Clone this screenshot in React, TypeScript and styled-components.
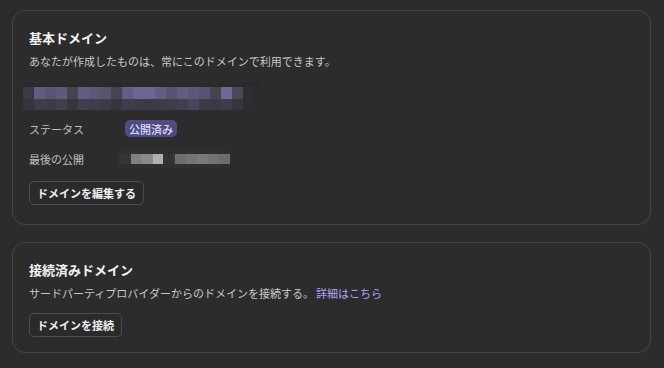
import styled, { createGlobalStyle } from 'styled-components';

const GlobalStyle = createGlobalStyle`
  html, body {
    margin: 0;
    padding: 0;
    background: #2c2c2c;
  }
  body {
    font-family: "Noto Sans CJK JP", "Noto Sans", sans-serif;
    -webkit-font-smoothing: antialiased;
  }
`;

const Page = styled.div`
  display: flex;
  flex-direction: column;
  gap: 17px;
  padding: 10px 13px 0 12px;
  width: 664px;
  height: 368px;
  box-sizing: border-box;
  background: #2c2c2c;
`;

const Card = styled.section<{ $padBottom: number }>`
  display: flex;
  flex-direction: column;
  align-items: flex-start;
  border: 1px solid #454545;
  border-radius: 13px;
  padding: 18px 16px ${(p) => p.$padBottom}px 16px;
  background: #2c2c2c;
`;

const Title = styled.h2`
  margin: 0;
  font-size: 13px;
  line-height: 18px;
  font-weight: 700;
  color: #f2f2f2;
`;

const Description = styled.p`
  margin: 6px 0 0;
  font-size: 11px;
  line-height: 16px;
  color: #c8c8c8;
`;

const Link = styled.a`
  margin-left: 2px;
  color: #a9a5f2;
  text-decoration: none;
`;

const Redacted = styled.svg<{ $offset: number }>`
  display: block;
  margin-left: ${(p) => p.$offset}px;
`;

const DomainBlur = styled(Redacted)`
  margin-top: 14px;
`;

const InfoRow = styled.div<{ $top: number; $height: number }>`
  display: grid;
  grid-template-columns: 96px auto;
  align-items: center;
  margin-top: ${(p) => p.$top}px;
  height: ${(p) => p.$height}px;
  line-height: 16px;
`;

const Label = styled.span`
  font-size: 11px;
  color: #c0c0c0;
`;

const Value = styled.div`
  display: flex;
  align-items: center;
  height: 100%;
`;

const Badge = styled.span`
  display: flex;
  align-items: center;
  height: 17px;
  padding: 0 4px;
  border-radius: 5px;
  background: #4f4d80;
  color: #dcd8ff;
  font-size: 11px;
  font-weight: 500;
`;

const Button = styled.button<{ $top: number }>`
  margin-top: ${(p) => p.$top}px;
  height: 24px;
  padding: 0 7px;
  border: 1px solid #4d4d4d;
  border-radius: 5px;
  background: #2a2a2a;
  color: #f0f0f0;
  font-family: inherit;
  font-size: 11px;
  font-weight: 700;
  cursor: pointer;
`;

const domainTop = [
  '#3b3a44', '#5f5d80', '#585674', '#5d5b7c', '#46454f', '#5f5d80', '#5a5878',
  '#56546f', '#46454f', '#605e83', '#6a6890', '#6a6890', '#605e82', '#56546f',
  '#5f5d80', '#5a5878', '#56546f', '#46454f', '#6c6a96', '#4a4958', '#2e2e30',
];
const domainBottom = [
  '#35343c', '#3e3d4a', '#3c3b47', '#403f4c', '#36353d', '#403f4c', '#3e3d49',
  '#3b3a45', '#36353d', '#3e3d4a', '#3c3b47', '#3a3945', '#3c3b47', '#3e3d4a',
  '#403f4c', '#474659', '#3c3b47', '#3a3945', '#3e3d4a', '#36353d', '#2e2e30',
];
const dateCells = [
  '#353535', '#808080', '#8a8a8a', '#b0b0b0', '#3a3a3a', '#6e6e6e', '#747474',
  '#7a7a7a', '#727272', '#6c6c6c',
];

const DomainMosaic = () => (
  <DomainBlur $offset={-7} width={236} height={29} viewBox="0 0 236 29">
    <rect x={0} y={0} width={236} height={4} fill="#2a2a2b" />
    {domainTop.map((c, i) => (
      <rect key={`t${i}`} x={1 + i * 11} y={4} width={11} height={12} fill={c} />
    ))}
    {domainBottom.map((c, i) => (
      <rect key={`b${i}`} x={1 + i * 11} y={16} width={11} height={11} fill={c} />
    ))}
  </DomainBlur>
);

const DateMosaic = () => (
  <Redacted $offset={-7} width={112} height={18} viewBox="0 0 112 18">
    <rect x={0} y={0} width={112} height={18} fill="#2f2f2f" />
    {dateCells.map((c, i) => (
      <rect key={i} x={2 + i * 11} y={4} width={11} height={10} fill={c} />
    ))}
    <rect x={45} y={4} width={10} height={10} fill="#323232" />
  </Redacted>
);

export default function App() {
  return (
    <>
      <GlobalStyle />
      <Page>
        <Card $padBottom={19}>
          <Title>基本ドメイン</Title>
          <Description>あなたが作成したものは、常にこのドメインで利用できます。</Description>
          <DomainMosaic />
          <InfoRow $top={8} $height={17}>
            <Label>ステータス</Label>
            <Value>
              <Badge>公開済み</Badge>
            </Value>
          </InfoRow>
          <InfoRow $top={13} $height={18}>
            <Label>最後の公開</Label>
            <Value>
              <DateMosaic />
            </Value>
          </InfoRow>
          <Button $top={13}>ドメインを編集する</Button>
        </Card>
        <Card $padBottom={15}>
          <Title>接続済みドメイン</Title>
          <Description>
            サードパーティプロバイダーからのドメインを接続する。
            <Link href="#">詳細はこちら</Link>
          </Description>
          <Button $top={12}>ドメインを接続</Button>
        </Card>
      </Page>
    </>
  );
}
